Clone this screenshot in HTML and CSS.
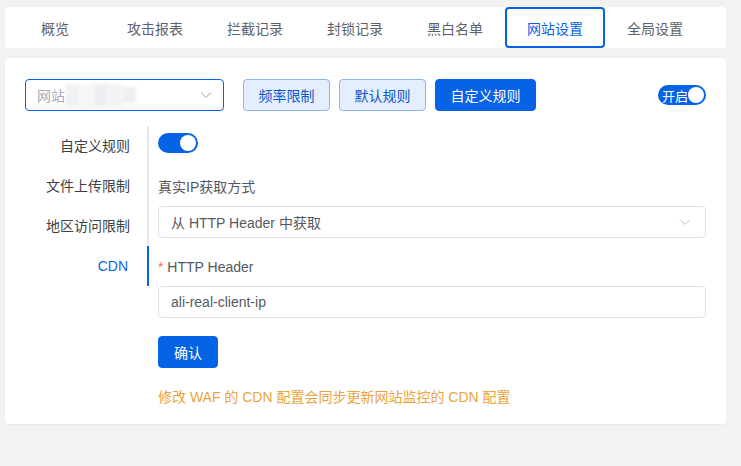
FILE: index.html
```html
<!DOCTYPE html>
<html lang="zh-CN">
<head>
<meta charset="utf-8">
<title>网站设置</title>
<link rel="stylesheet" href="styles.css">
</head>
<body>
<div class="tabs">
  <div class="tab">概览</div>
  <div class="tab">攻击报表</div>
  <div class="tab">拦截记录</div>
  <div class="tab">封锁记录</div>
  <div class="tab">黑白名单</div>
  <div class="tab active">网站设置</div>
  <div class="tab">全局设置</div>
</div>
<div class="card">
  <div class="toolbar">
    <div class="site-select">
      <span class="placeholder">网站</span>
      <span class="blur"><i></i><i></i><i></i><i></i><i></i></span>
      <svg class="chev" width="12" height="8" viewBox="0 0 12 8"><path d="M1 1.5 L6 6.5 L11 1.5" fill="none" stroke="#c0c4cc" stroke-width="1.2"/></svg>
    </div>
    <button class="btn light">频率限制</button>
    <button class="btn light">默认规则</button>
    <button class="btn primary wide">自定义规则</button>
    <div class="spacer"></div>
    <div class="switch-text"><span>开启</span><i class="knob"></i></div>
  </div>
  <div class="body">
    <div class="menu">
      <div class="menu-item">自定义规则</div>
      <div class="menu-item">文件上传限制</div>
      <div class="menu-item">地区访问限制</div>
      <div class="menu-item active">CDN</div>
    </div>
    <div class="content">
      <div class="switch"><i class="knob"></i></div>
      <div class="label">真实IP获取方式</div>
      <div class="field select">
        <span>从 HTTP Header 中获取</span>
        <svg width="12" height="8" viewBox="0 0 12 8"><path d="M1 1.5 L6 6.5 L11 1.5" fill="none" stroke="#c0c4cc" stroke-width="1"/></svg>
      </div>
      <div class="label"><span class="req">*</span> HTTP Header</div>
      <div class="field"><span>ali-real-client-ip</span></div>
      <button class="btn primary confirm">确认</button>
      <div class="note">修改 WAF 的 CDN 配置会同步更新网站监控的 CDN 配置</div>
    </div>
  </div>
</div>
</body>
</html>
```
FILE: styles.css
```css
* { box-sizing: border-box; }
body {
  margin: 0;
  padding: 7px 15px 0 5px;
  background: #f2f2f3;
  font-family: "Liberation Sans", "Noto Sans CJK SC", sans-serif;
  font-size: 14px;
  color: #55595f;
  height: 466px;
  overflow: hidden;
}
.tabs {
  display: flex;
  background: #fff;
  border-radius: 4px;
  height: 41px;
}
.tab {
  width: 100px;
  height: 41px;
  display: flex;
  align-items: center;
  justify-content: center;
  color: #5e6268;
}
.tab.active {
  border: 2px solid #0763e5;
  border-radius: 4px;
  color: #0763e5;
}
.card {
  margin-top: 10px;
  background: #fff;
  border-radius: 4px;
  height: 366px;
  padding: 21px 20px 0 20px;
  box-shadow: 0 1px 1px #e6e9f0;
}
.toolbar {
  display: flex;
  align-items: center;
  height: 32px;
}
.site-select {
  width: 199px;
  height: 32px;
  border: 1px solid #0763e5;
  border-radius: 4px;
  display: flex;
  align-items: center;
  padding: 0 11px;
  margin-right: 19px;
}
.placeholder { color: #a8abb2; }
.blur { display: flex; margin-left: 1px; height: 24px; align-items: center; }
.blur i {
  display: block;
  width: 14px;
  height: 22px;
  background: #f0f1f3;
  filter: blur(1.5px);
}
.blur i:nth-child(2) { background: #f5f6f7; }
.blur i:nth-child(3) { background: #eceef1; }
.blur i:nth-child(4) { background: #f1f2f4; }
.blur i:nth-child(5) { background: #eef0f2; height: 16px; }
.chev { margin-left: auto; margin-right: 0; }
.btn {
  font-family: inherit;
  font-size: 14px;
  height: 32px;
  border-radius: 4px;
  padding: 0;
  cursor: pointer;
}
.btn.light {
  width: 87px;
  margin-right: 9px;
  background: #e5eefc;
  border: 1px solid #8eb5f0;
  color: #0c57c9;
}
.btn.primary {
  background: #0763e5;
  border: 1px solid #0763e5;
  color: #fff;
}
.btn.wide { width: 101px; }
.spacer { flex: 1; }
.switch-text {
  width: 48px;
  height: 20px;
  border-radius: 10px;
  background: #0763e5;
  display: flex;
  align-items: center;
  justify-content: space-between;
  padding: 0 2px 0 4px;
  color: #fff;
  font-size: 13px;
}
.knob {
  display: block;
  width: 16px;
  height: 16px;
  border-radius: 50%;
  background: #fff;
}
.body {
  display: flex;
  margin-top: 15px;
}
.menu {
  width: 124px;
  border-right: 2px solid #e4e7ed;
  align-self: flex-start;
}
.menu-item {
  height: 40px;
  line-height: 40px;
  text-align: right;
  padding-right: 19px;
  color: #3c3f44;
  margin-right: -2px;
}
.menu-item.active {
  color: #0763e5;
  border-right: 2px solid #0763e5;
}
.content {
  flex: 1;
  padding-left: 9px;
  display: flex;
  flex-direction: column;
  align-items: flex-start;
}
.switch {
  width: 40px;
  height: 20px;
  border-radius: 10px;
  background: #0763e5;
  display: flex;
  align-items: center;
  justify-content: flex-end;
  padding-right: 2px;
  margin-top: 7px;
}
.label {
  margin-top: 23px;
  height: 22px;
  line-height: 22px;
}
.req { color: #f56c6c; }
.field {
  margin-top: 8px;
  width: 548px;
  height: 32px;
  border: 1px solid #dcdfe6;
  border-radius: 4px;
  display: flex;
  align-items: center;
  justify-content: space-between;
  padding: 0 14px 0 12px;
}
.field.select + .label { margin-top: 18px; }
.confirm {
  margin-top: 18px;
  width: 60px;
}
.note {
  margin-top: 18px;
  color: #eba33d;
  line-height: 22px;
}
```
